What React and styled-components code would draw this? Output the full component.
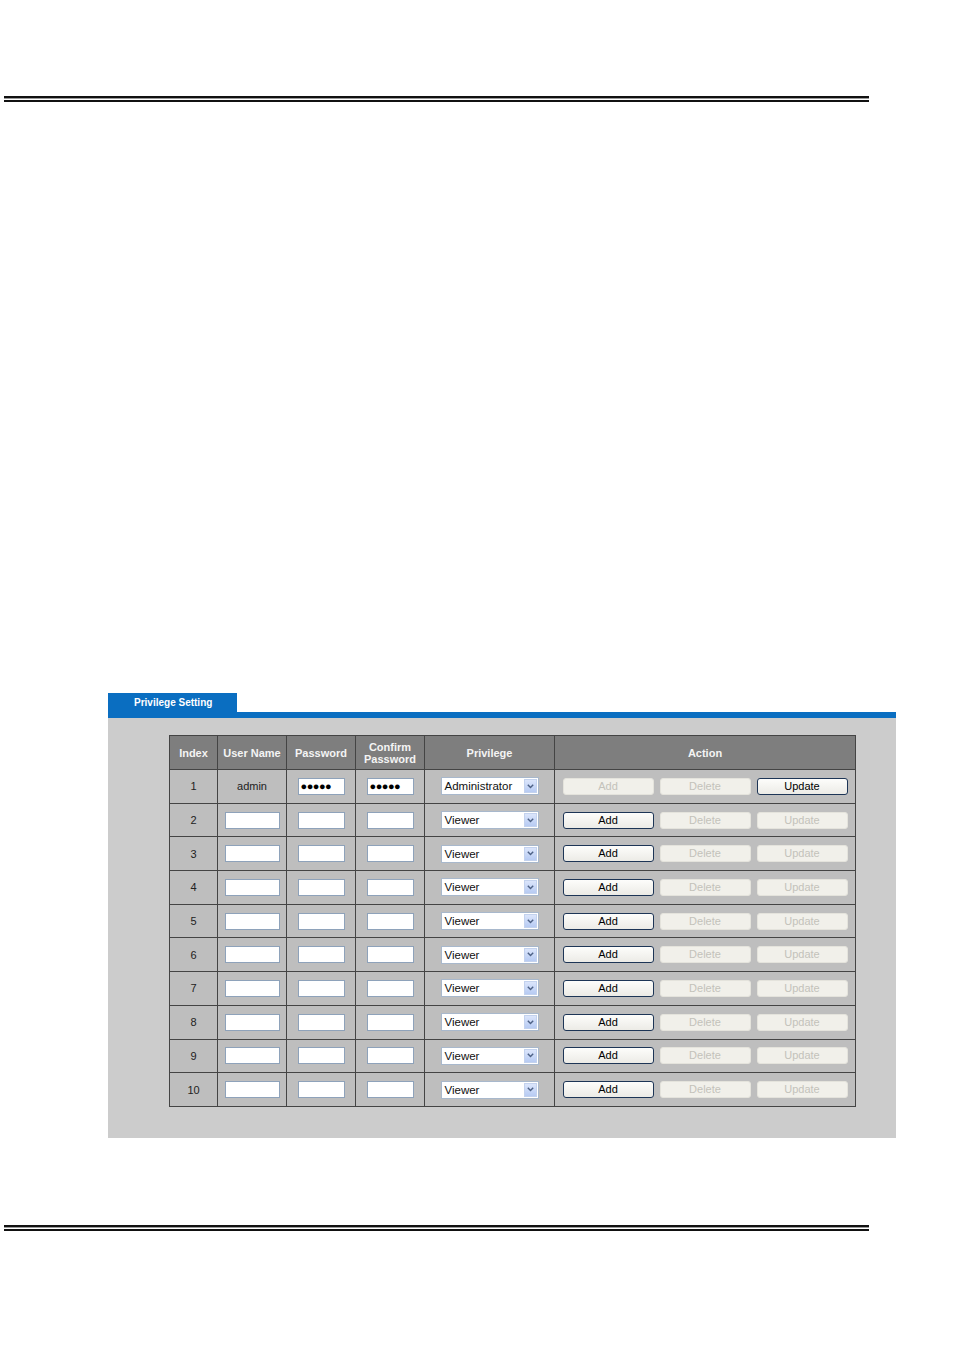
import React from 'react';
import styled, { createGlobalStyle } from 'styled-components';

const Global = createGlobalStyle`
  body {
    margin: 0;
    background: #fff;
    font-family: "Liberation Sans", Arial, sans-serif;
  }
`;

const Page = styled.div`
  width: 954px;
  height: 1350px;
  padding-top: 96px;
  box-sizing: border-box;
`;

const Rule = styled.div`
  margin-left: 4px;
  width: 865px;
  height: 6px;
  box-sizing: border-box;
  border-top: 2px solid #111;
  border-bottom: 2px solid #111;
  background: linear-gradient(#9a9a9a 0 1px, #fff 1px);
  margin-top: ${p => p.$top || 0}px;
`;

const Panel = styled.div`
  margin: 591px 0 0 108px;
  width: 788px;
`;

const Tab = styled.div`
  width: 129px;
  height: 19px;
  background: #0a6ec1;
  color: #fff;
  font-size: 10px;
  font-weight: bold;
  line-height: 19px;
  padding-left: 26px;
  box-sizing: border-box;
`;

const BlueBar = styled.div`
  height: 6px;
  background: #0a6ec1;
`;

const PanelBody = styled.div`
  background: #cccccc;
  height: 420px;
  padding: 17px 0 0 61px;
  box-sizing: border-box;
`;

const Table = styled.table`
  border-collapse: collapse;
  width: 686px;
  table-layout: fixed;
  border: 1px solid #444;
`;

const Th = styled.th`
  background: #7e7e7e;
  color: #f4f4f4;
  font-size: 11px;
  font-weight: bold;
  line-height: 12px;
  height: 33px;
  padding: 0;
  border: 1px solid #444;
  text-align: center;
`;

const Tr = styled.tr`
  height: 33.7px;
`;

const Td = styled.td`
  background: #bebebe;
  border: 1px solid #444;
  padding: 0;
  text-align: center;
  font-size: 11px;
  color: #222;
  vertical-align: middle;
`;

const Field = styled.div`
  display: inline-block;
  vertical-align: middle;
  width: ${p => p.$w}px;
  height: 17px;
  box-sizing: border-box;
  background: #fff;
  border: 1px solid #8ea2ba;
  text-align: left;
  font-size: 11px;
  letter-spacing: -0.5px;
  line-height: 15px;
  padding-left: 2px;
  color: #000;
`;

const Select = styled.div`
  display: inline-flex;
  align-items: center;
  vertical-align: middle;
  width: 98px;
  height: 18px;
  box-sizing: border-box;
  background: #fff;
  border: 1px solid #a8b8cc;
  font-size: 11.5px;
  color: #111;
  text-align: left;
  padding: 1px 1px 1px 3px;
`;

const SelectText = styled.span`
  flex: 1;
`;

const Arrow = styled.span`
  width: 13px;
  height: 14px;
  background: linear-gradient(#dbe5fb, #b7cbf3);
  border: 1px solid #c3d2ee;
  box-sizing: border-box;
  display: flex;
  align-items: center;
  justify-content: center;
`;

const Actions = styled.div`
  display: flex;
  justify-content: center;
  gap: 6px;
`;

const Button = styled.div`
  width: 91px;
  height: 17px;
  box-sizing: border-box;
  border-radius: 3px;
  font-size: 11px;
  line-height: 15px;
  text-align: center;
  background: ${p => (p.$off ? '#f1f0ea' : 'linear-gradient(#fdfdfb, #ecebe6)')};
  border: 1px solid ${p => (p.$off ? '#e4e3dc' : '#1d3556')};
  color: ${p => (p.$off ? '#c3c2ba' : '#000')};
`;

const Chevron = () => (
  <svg width="7" height="5" viewBox="0 0 7 5">
    <path d="M0.8 0.8 L3.5 3.6 L6.2 0.8" fill="none" stroke="#4d6185" strokeWidth="1.4" />
  </svg>
);

const rows = Array.from({ length: 10 }, (_, i) => i + 1);

const App = () => (
  <Page>
    <Global />
    <Rule />
    <Panel>
      <Tab>Privilege Setting</Tab>
      <BlueBar />
      <PanelBody>
        <Table>
          <colgroup>
            <col style={{ width: 48 }} />
            <col style={{ width: 69 }} />
            <col style={{ width: 69 }} />
            <col style={{ width: 69 }} />
            <col style={{ width: 130 }} />
            <col style={{ width: 301 }} />
          </colgroup>
          <thead>
            <tr>
              <Th>Index</Th>
              <Th>User Name</Th>
              <Th>Password</Th>
              <Th>Confirm<br />Password</Th>
              <Th>Privilege</Th>
              <Th>Action</Th>
            </tr>
          </thead>
          <tbody>
            {rows.map(n => {
              const admin = n === 1;
              return (
                <Tr key={n}>
                  <Td>{n}</Td>
                  <Td>{admin ? 'admin' : <Field $w={55} />}</Td>
                  <Td><Field $w={47}>{admin ? '●●●●●' : ''}</Field></Td>
                  <Td><Field $w={47}>{admin ? '●●●●●' : ''}</Field></Td>
                  <Td>
                    <Select>
                      <SelectText>{admin ? 'Administrator' : 'Viewer'}</SelectText>
                      <Arrow><Chevron /></Arrow>
                    </Select>
                  </Td>
                  <Td>
                    <Actions>
                      <Button $off={admin}>Add</Button>
                      <Button $off>Delete</Button>
                      <Button $off={!admin}>Update</Button>
                    </Actions>
                  </Td>
                </Tr>
              );
            })}
          </tbody>
        </Table>
      </PanelBody>
    </Panel>
    <Rule $top={87} />
  </Page>
);

export default App;
